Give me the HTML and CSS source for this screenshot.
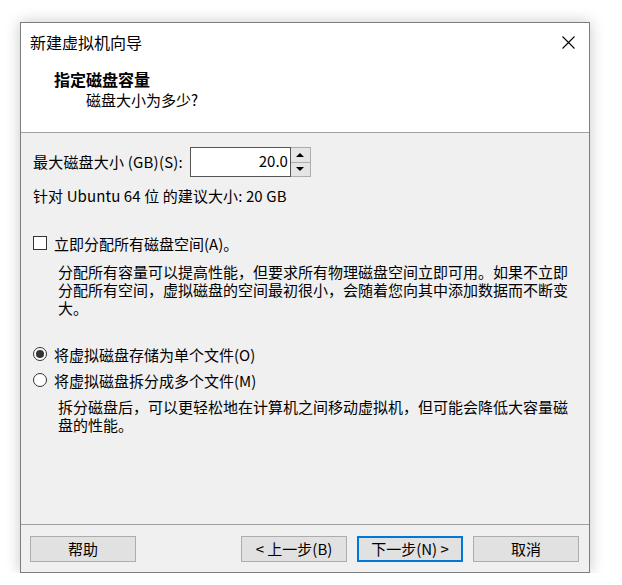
FILE: index.html
```html
<!DOCTYPE html>
<html lang="zh-CN">
<head>
<meta charset="utf-8">
<title>新建虚拟机向导</title>
<link rel="stylesheet" href="styles.css">
</head>
<body>
<div class="dialog">
  <div class="header">
    <div class="titlebar">
      <span class="title">新建虚拟机向导</span>
      <svg class="close" width="13" height="13" viewBox="0 0 13 13"><path d="M0.5 0.5 L12.5 12.5 M12.5 0.5 L0.5 12.5" stroke="#000" stroke-width="1.1" fill="none"/></svg>
    </div>
    <div class="heading">指定磁盘容量</div>
    <div class="subheading">磁盘大小为多少?</div>
  </div>
  <div class="body">
    <div class="size-row">
      <span class="label">最大磁盘大小 (GB)(S):</span>
      <div class="spinbox">
        <div class="spin-input">20.0</div>
        <div class="spin-buttons">
          <div class="spin-btn"><svg width="8" height="4" viewBox="0 0 8 4"><path d="M4 0 L8 4 L0 4 Z" fill="#000"/></svg></div>
          <div class="spin-btn"><svg width="8" height="4" viewBox="0 0 8 4"><path d="M0 0 L8 0 L4 4 Z" fill="#000"/></svg></div>
        </div>
      </div>
    </div>
    <div class="recommend">针对 Ubuntu 64 位 的建议大小: 20 GB</div>
    <div class="option check-row">
      <span class="checkbox"></span>
      <span>立即分配所有磁盘空间(A)。</span>
    </div>
    <div class="desc desc-alloc">分配所有容量可以提高性能，但要求所有物理磁盘空间立即可用。如果不立即分配所有空间，虚拟磁盘的空间最初很小，会随着您向其中添加数据而不断变大。</div>
    <div class="option radio-row first">
      <span class="radio checked"></span>
      <span>将虚拟磁盘存储为单个文件(O)</span>
    </div>
    <div class="option radio-row">
      <span class="radio"></span>
      <span>将虚拟磁盘拆分成多个文件(M)</span>
    </div>
    <div class="desc desc-split">拆分磁盘后，可以更轻松地在计算机之间移动虚拟机，但可能会降低大容量磁盘的性能。</div>
  </div>
  <div class="footer">
    <button class="btn">帮助</button>
    <div class="spacer"></div>
    <button class="btn">&lt; 上一步(B)</button>
    <button class="btn primary">下一步(N) &gt;</button>
    <button class="btn">取消</button>
  </div>
</div>
</body>
</html>
```
FILE: styles.css
```css
html, body {
  margin: 0;
  padding: 0;
  background: #ffffff;
}
body {
  font-family: "Noto Sans CJK SC", "Noto Sans", sans-serif;
  font-size: 15px;
  color: #000;
  padding: 22px 0 0 20px;
}
.dialog {
  width: 568px;
  height: 549px;
  border: 1px solid #7d7d7d;
  box-shadow: 0 0 14px rgba(0, 0, 0, 0.22);
  background: #f0f0f0;
  display: flex;
  flex-direction: column;
}
.header {
  background: #ffffff;
  height: 109px;
  border-bottom: 1px solid #a0a0a0;
  box-sizing: content-box;
}
.titlebar {
  height: 38px;
  display: flex;
  align-items: center;
  justify-content: space-between;
  padding-left: 9px;
}
.title {
  font-size: 16px;
  line-height: 38px;
}
.close {
  margin-right: 14px;
}
.heading {
  margin-top: 8px;
  padding-left: 33px;
  font-weight: bold;
  font-size: 16px;
  line-height: 20px;
}
.subheading {
  margin-top: 1px;
  padding-left: 65px;
  line-height: 20px;
}
.body {
  height: 391px;
  padding-left: 12px;
  border-bottom: 1px solid #a0a0a0;
  box-sizing: content-box;
}
.size-row {
  margin-top: 14px;
  display: flex;
  align-items: center;
  height: 30px;
}
.label {
  line-height: 20px;
  margin-right: 7px;
  letter-spacing: 0.2px;
}
.spinbox {
  display: flex;
  height: 30px;
}
.spin-input {
  height: 28px;
  border: 1px solid #555;
  background: #fff;
  text-align: right;
  line-height: 26px;
  padding-right: 2px;
  box-sizing: content-box;
  width: 97px;
}
.spin-buttons {
  width: 20px;
  display: flex;
  flex-direction: column;
  border: 1px solid #adadad;
  border-left: none;
  box-sizing: border-box;
  background: #fff;
}
.spin-btn {
  flex: 1;
  background: #e5e5e5;
  display: flex;
  align-items: center;
  justify-content: center;
  border-bottom: 1px solid #adadad;
}
.spin-btn:last-child {
  border-bottom: none;
}
.recommend {
  margin-top: 9px;
  line-height: 20px;
  letter-spacing: 0.1px;
}
.option {
  display: flex;
  align-items: center;
  gap: 7px;
}
.check-row {
  margin-top: 27px;
  height: 20px;
}
.checkbox {
  width: 14px;
  height: 14px;
  border: 1px solid #333;
  background: #fff;
  box-sizing: border-box;
  display: inline-block;
}
.desc {
  padding-left: 25px;
  padding-right: 20px;
  line-height: 18px;
}
.desc-alloc {
  margin-top: 10px;
}
.radio-row {
  height: 26px;
}
.radio-row.first {
  margin-top: 24px;
}
.radio {
  width: 14px;
  height: 14px;
  border: 1px solid #333;
  border-radius: 50%;
  background: #fff;
  box-sizing: border-box;
  display: inline-flex;
  align-items: center;
  justify-content: center;
}
.radio.checked::after {
  content: "";
  width: 8px;
  height: 8px;
  border-radius: 50%;
  background: #333;
}
.desc-split {
  margin-top: 5px;
}
.footer {
  flex: 1;
  display: flex;
  align-items: flex-start;
  padding: 11px 10px 0 9px;
  gap: 10px;
}
.spacer {
  flex: 1;
}
.btn {
  width: 106px;
  height: 26px;
  background: #e1e1e1;
  border: 1px solid #adadad;
  font-family: "Noto Sans CJK SC", "Noto Sans", sans-serif;
  font-size: 15px;
  color: #000;
  padding: 0;
  line-height: 22px;
}
.btn.primary {
  border: 2px solid #0078d7;
}
```
